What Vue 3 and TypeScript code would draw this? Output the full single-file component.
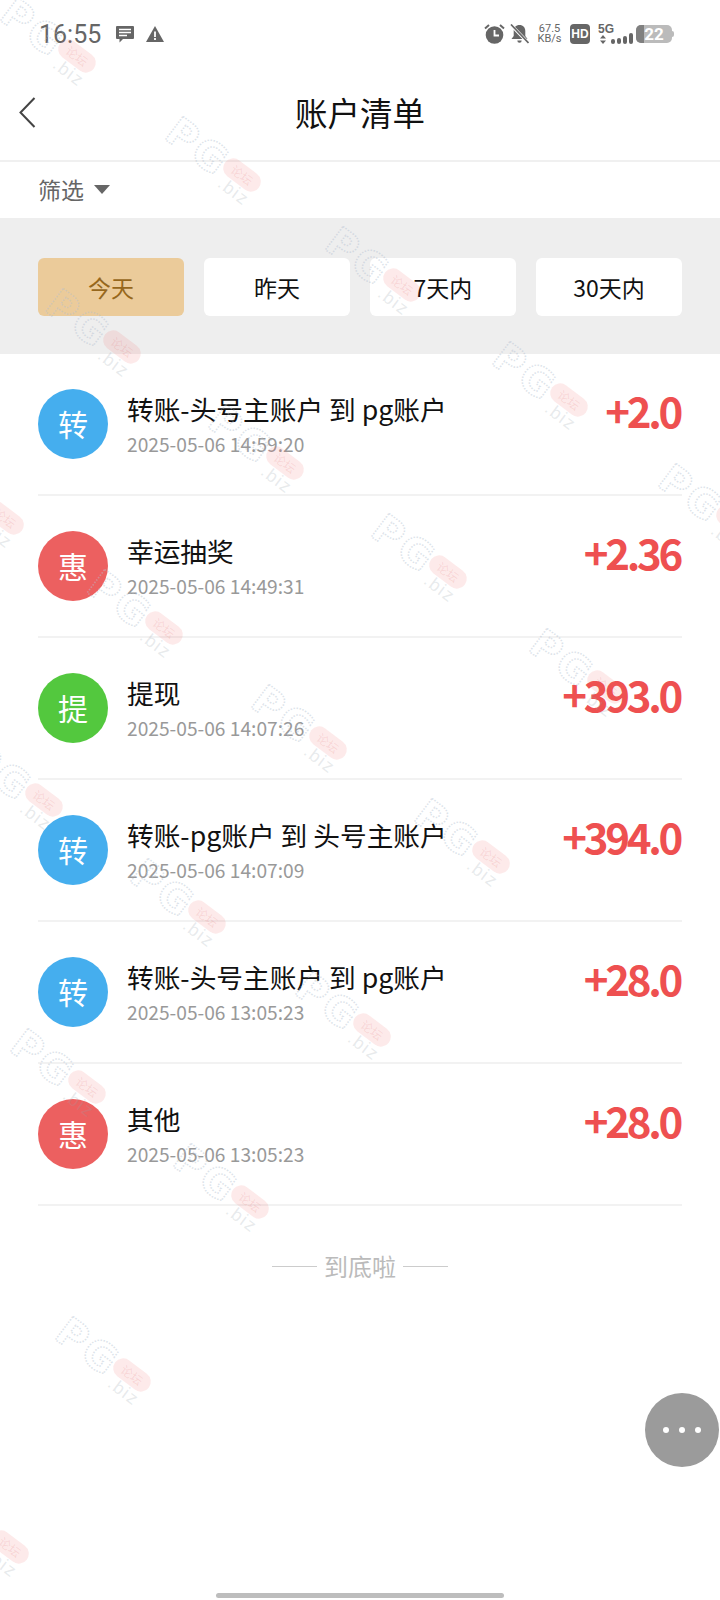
<template>
  <div class="page">
    <div class="status-bar">
      <span class="time">16:55</span>
      <svg class="st-msg" width="18" height="17" viewBox="0 0 18 17">
        <path d="M1 0h16a1 1 0 0 1 1 1v11a1 1 0 0 1-1 1H7l-3.500 3.500V13H1a1 1 0 0 1-1-1V1a1 1 0 0 1 1-1z" fill="#666" />
        <path d="M3 3.500h12M3 6.500h12M3 9.500h8" stroke="#fff" stroke-width="1.300" />
      </svg>
      <svg class="st-warn" width="18" height="16" viewBox="0 0 18 16">
        <path d="M9 0l9 16H0z" fill="#666" />
        <path d="M8.100 5.500h1.800v5.500H8.100zM8.100 12h1.800v2H8.100z" fill="#fff" />
      </svg>
      <div class="st-right">
        <svg width="21" height="20" viewBox="0 0 21 20">
          <circle cx="10.500" cy="11" r="8.800" fill="#666" />
          <path d="M10.500 6v5.500H15" fill="none" stroke="#fff" stroke-width="1.800" />
          <path d="M1 4.500L5 1M20 4.500L16 1" stroke="#666" stroke-width="2" />
        </svg>
        <svg class="st-bell" width="19" height="20" viewBox="0 0 19 20">
          <path d="M9.500 1c3.600 0 5.800 2.600 5.800 6v5l2.200 3H1.500l2.200-3V7c0-3.400 2.200-6 5.800-6z" fill="#666" />
          <path d="M7.300 16.500h4.400a2.200 2.200 0 0 1-4.400 0z" fill="#666" />
          <path d="M0.500 0.500l18 18.500" stroke="#fff" stroke-width="3.200" />
          <path d="M1 0.500l17.500 18.500" stroke="#666" stroke-width="1.700" />
        </svg>
        <div class="speed"><span>67.5</span><span>KB/s</span></div>
        <div class="hd">HD</div>
        <div class="net">
          <span class="five-g">5G</span>
          <svg width="6" height="9" viewBox="0 0 6 9">
            <path d="M3 0l3 3.500H0zM3 9L0 5.500h6z" fill="#666" />
          </svg>
        </div>
        <div class="bars">
          <i v-for="h in [5, 6, 8, 11]" :key="h" :style="{ height: h + 'px' }"></i>
        </div>
        <div class="battery">
          <span class="battery-fill"></span>
          <span class="battery-num">22</span>
        </div>
        <i class="battery-nub"></i>
      </div>
    </div>

    <header class="nav">
      <svg class="back" width="17" height="31" viewBox="0 0 17 31">
        <path d="M15.500 1L1.500 15.500l14 14.500" fill="none" stroke="#444" stroke-width="2" />
      </svg>
      <h1>账户清单</h1>
    </header>

    <div class="filter">
      <span>筛选</span>
      <i class="caret"></i>
    </div>

    <div class="tabs">
      <button v-for="(t, i) in tabs" :key="t" class="tab" :class="{ active: i === 0 }">{{ t }}</button>
    </div>

    <ul class="list">
      <li v-for="(r, i) in rows" :key="i" class="row">
        <span class="avatar" :style="{ background: colors[r.tag] }">{{ r.tag }}</span>
        <div class="info">
          <div class="title">{{ r.title }}</div>
          <div class="date">{{ r.date }}</div>
        </div>
        <div class="amount">{{ r.amount }}</div>
      </li>
    </ul>

    <div class="end">
      <i></i>
      <span>到底啦</span>
      <i></i>
    </div>

    <div class="fab"><i></i><i></i><i></i></div>
    <div class="home-bar"></div>

    <div class="marks">
      <div v-for="(m, i) in marks" :key="i" class="mark" :style="{ left: m[0] + 'px', top: m[1] + 'px' }">
        <svg class="mark-pg" width="90" height="50" viewBox="0 0 90 50">
          <text x="2" y="40">PG</text>
        </svg>
        <span class="mark-pill">论坛</span>
        <span class="mark-biz">.biz</span>
      </div>
    </div>
  </div>
</template>

<script setup lang="ts">
interface Row {
  tag: string
  title: string
  date: string
  amount: string
}

const tabs = ['今天', '昨天', '7天内', '30天内']

const colors: Record<string, string> = {
  转: '#45aeee',
  惠: '#ec6060',
  提: '#53c83e',
}

const rows: Row[] = [
  { tag: '转', title: '转账-头号主账户 到 pg账户', date: '2025-05-06 14:59:20', amount: '+2.0' },
  { tag: '惠', title: '幸运抽奖', date: '2025-05-06 14:49:31', amount: '+2.36' },
  { tag: '提', title: '提现', date: '2025-05-06 14:07:26', amount: '+393.0' },
  { tag: '转', title: '转账-pg账户 到 头号主账户', date: '2025-05-06 14:07:09', amount: '+394.0' },
  { tag: '转', title: '转账-头号主账户 到 pg账户', date: '2025-05-06 13:05:23', amount: '+28.0' },
  { tag: '惠', title: '其他', date: '2025-05-06 13:05:23', amount: '+28.0' },
]

// pill centres of the forum watermark
const marks: [number, number][] = [
  [77, 56], [242, 175], [402, 285], [569, 400], [735, 522],
  [122, 347], [285, 463], [448, 572], [606, 687],
  [5, 518], [164, 628], [328, 743], [491, 857],
  [44, 800], [207, 917], [372, 1030],
  [87, 1087], [250, 1202], [132, 1375], [10, 1547],
]
</script>

<style scoped>
.page {
  position: relative;
  width: 720px;
  height: 1600px;
  overflow: hidden;
  background: #fff;
  font-family: "Noto Sans CJK SC", "Noto Sans", sans-serif;
  color: #111;
}

.status-bar {
  display: flex;
  align-items: center;
  height: 68px;
  padding: 0 46px 0 39px;
  box-sizing: border-box;
}

.time {
  font-family: Roboto, sans-serif;
  font-size: 25px;
  color: #666;
  width: 77px;
}

.st-warn {
  margin-left: 12px;
}

.st-right {
  display: flex;
  align-items: center;
  margin-left: auto;
}

.st-bell {
  margin-left: 5px;
}

.speed {
  display: flex;
  flex-direction: column;
  width: 25px;
  margin-left: 8px;
  font-family: Roboto, sans-serif;
  font-size: 11px;
  line-height: 10.500px;
  color: #666;
  text-align: center;
}

.hd {
  width: 20px;
  height: 20px;
  margin-left: 8px;
  border-radius: 4px;
  background: #666;
  color: #fff;
  font-family: "Liberation Sans", sans-serif;
  font-size: 12px;
  font-weight: 700;
  line-height: 20px;
  text-align: center;
}

.net {
  display: flex;
  flex-direction: column;
  align-items: flex-start;
  width: 14px;
  margin-left: 8px;
}

.net svg {
  margin-left: 2px;
}

.five-g {
  font-family: "Liberation Sans", sans-serif;
  font-size: 12px;
  font-weight: 700;
  line-height: 11px;
  color: #666;
}

.bars {
  display: flex;
  align-items: flex-end;
  gap: 2px;
  height: 20px;
  margin-left: -1px;
}

.bars i {
  width: 4px;
  border-radius: 2px;
  background: #666;
}

.battery {
  position: relative;
  display: flex;
  align-items: center;
  justify-content: center;
  width: 36px;
  height: 18px;
  margin-left: 3px;
  border-radius: 5px;
  background: #bbb;
  overflow: hidden;
}

.battery-fill {
  position: absolute;
  left: 0;
  top: 0;
  bottom: 0;
  width: 8px;
  background: #808080;
}

.battery-num {
  position: relative;
  font-family: Roboto, sans-serif;
  font-size: 17px;
  font-weight: 700;
  color: #fff;
  line-height: 18px;
}

.battery-nub {
  width: 2px;
  height: 6px;
  border-radius: 0 2px 2px 0;
  background: #bbb;
}

.nav {
  position: relative;
  display: flex;
  align-items: center;
  justify-content: center;
  height: 94px;
  padding-bottom: 5px;
  box-sizing: border-box;
  border-bottom: 2px solid #f0f0f0;
}

.back {
  position: absolute;
  left: 19px;
  top: 29px;
}

.nav h1 {
  margin: 0;
  font-size: 32.500px;
  font-weight: 400;
}

.filter {
  display: flex;
  align-items: center;
  height: 56px;
  padding-left: 38px;
  padding-bottom: 2px;
  box-sizing: border-box;
  font-size: 23px;
  color: #666;
}

.caret {
  width: 0;
  height: 0;
  margin-left: 10px;
  border-left: 8px solid transparent;
  border-right: 8px solid transparent;
  border-top: 9px solid #666;
}

.tabs {
  display: grid;
  grid-template-columns: repeat(4, 1fr);
  gap: 20px;
  height: 136px;
  padding: 40px 38px 38px;
  box-sizing: border-box;
  background: #eee;
}

.tab {
  padding: 0;
  border: 0;
  border-radius: 6px;
  background: #fff;
  color: #111;
  font-family: inherit;
  font-size: 23px;
}

.tab.active {
  background: #ebcb9a;
  color: #96671c;
}

.list {
  margin: 0;
  padding: 0 38px;
  list-style: none;
}

.row {
  display: flex;
  align-items: center;
  height: 142px;
  box-sizing: border-box;
  border-bottom: 2px solid #f2f2f2;
}

.avatar {
  flex: none;
  width: 70px;
  height: 70px;
  border-radius: 50%;
  color: #fff;
  font-size: 30px;
  line-height: 68px;
  text-align: center;
}

.info {
  flex: 1;
  margin-left: 19px;
}

.title {
  font-size: 26.700px;
  line-height: 36px;
}

.date {
  margin-top: 3px;
  font-size: 19.200px;
  line-height: 28px;
  color: #999;
}

.amount {
  margin-bottom: 28px;
  padding-right: 2px;
  font-size: 42px;
  font-weight: 600;
  letter-spacing: -3.300px;
  line-height: 50px;
  color: #ee5050;
}

.end {
  display: flex;
  align-items: center;
  justify-content: center;
  margin-top: 42px;
  color: #bbb;
  font-size: 24px;
  line-height: 36px;
}

.end i {
  width: 45px;
  height: 1px;
  background: #ccc;
}

.end span {
  margin: 0 7px;
}

.fab {
  position: absolute;
  left: 645px;
  top: 1393px;
  display: flex;
  align-items: center;
  justify-content: center;
  gap: 10px;
  width: 74px;
  height: 74px;
  border-radius: 50%;
  background: #9b9b9b;
}

.fab i {
  width: 6px;
  height: 6px;
  border-radius: 50%;
  background: #fff;
}

.home-bar {
  position: absolute;
  left: 216px;
  top: 1593px;
  width: 288px;
  height: 5px;
  border-radius: 3px;
  background: #bdbdbd;
}

.marks {
  position: absolute;
  inset: 0;
  pointer-events: none;
}

.mark {
  position: absolute;
  width: 0;
  height: 0;
  transform: rotate(37deg);
}

.mark-pg {
  position: absolute;
  left: -88px;
  top: -22px;
  overflow: visible;
}

.mark-pg text {
  font-family: "DejaVu Sans", sans-serif;
  font-size: 40px;
  font-weight: 700;
  letter-spacing: 3px;
  fill: none;
  stroke: #b4bfcf;
  stroke-opacity: 0.45;
  stroke-width: 1.600;
  stroke-dasharray: 1.500 1.500;
}

.mark-pill {
  position: absolute;
  left: -21px;
  top: -10px;
  width: 42px;
  height: 20px;
  border-radius: 10px;
  background: rgba(240, 90, 90, 0.13);
  color: rgba(220, 80, 80, 0.14);
  font-size: 12px;
  line-height: 20px;
  text-align: center;
}

.mark-biz {
  position: absolute;
  left: -14px;
  top: 8px;
  font-family: "Liberation Sans", sans-serif;
  font-size: 18px;
  line-height: 20px;
  letter-spacing: 1.500px;
  color: rgba(150, 160, 170, 0.22);
}
</style>
